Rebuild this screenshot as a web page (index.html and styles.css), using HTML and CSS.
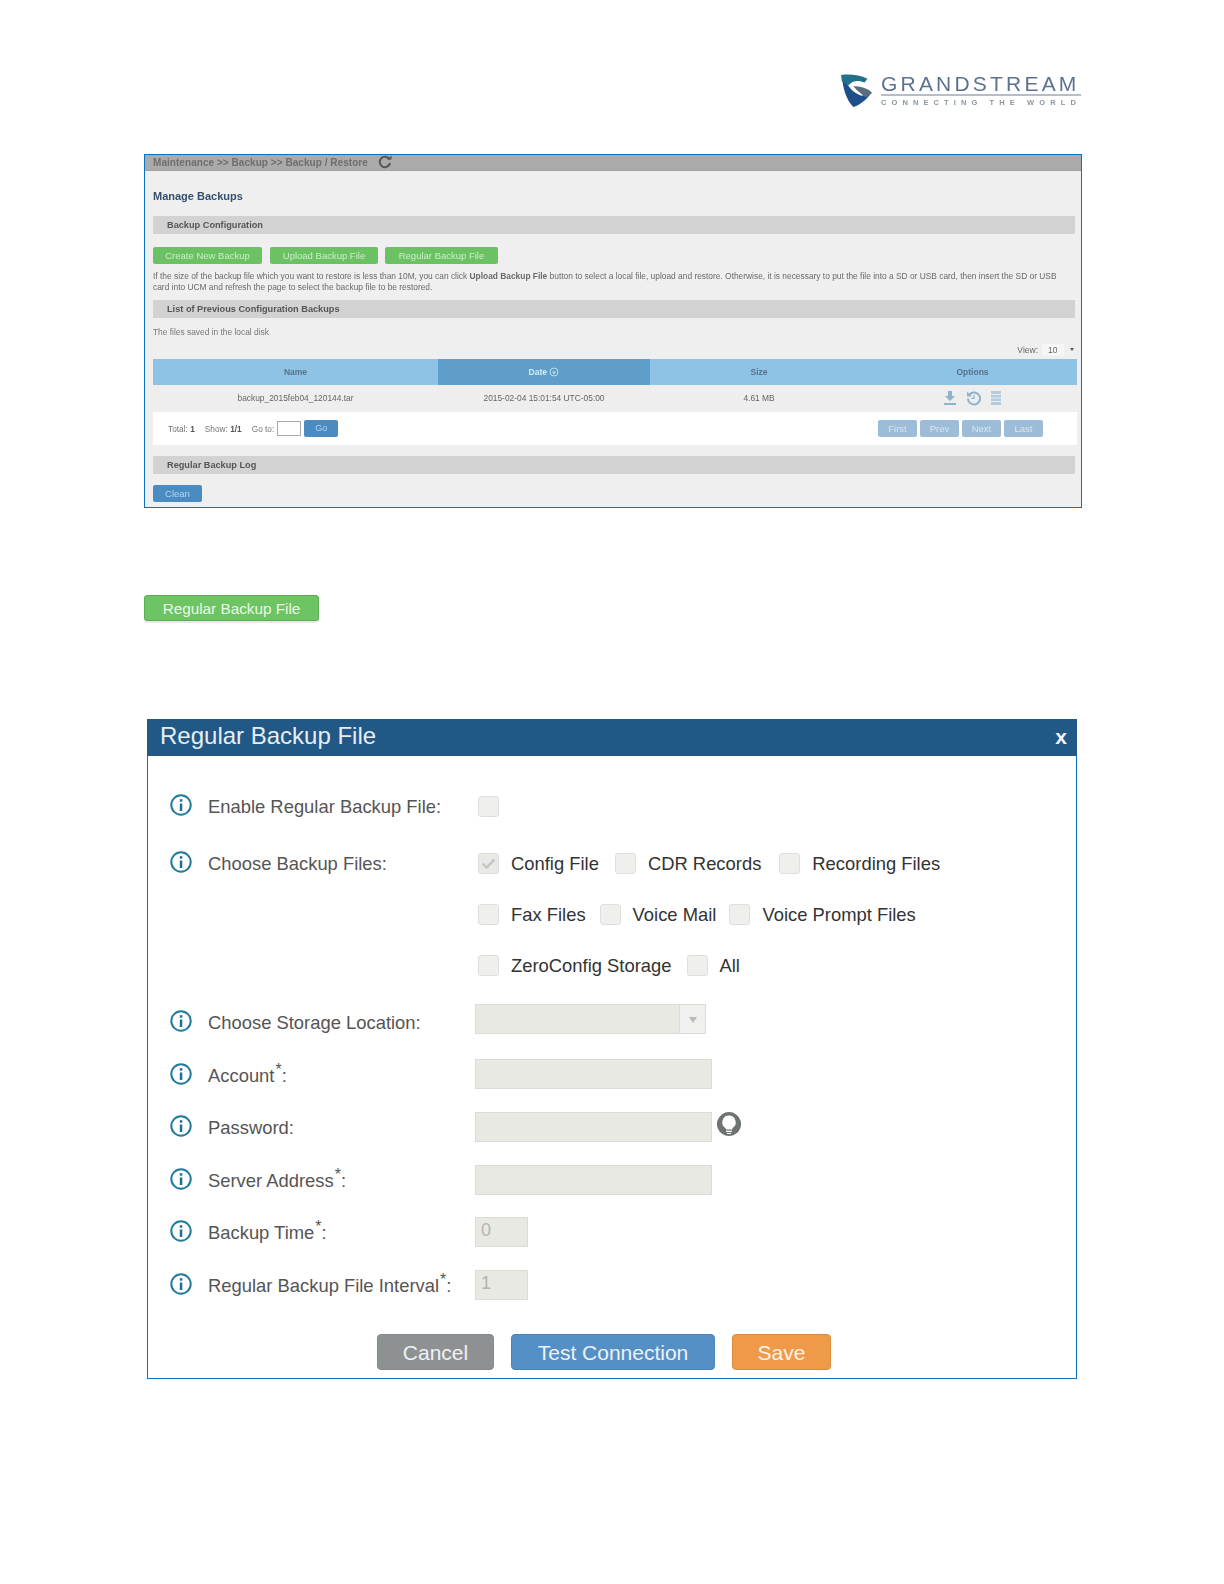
FILE: index.html
```html
<!DOCTYPE html>
<html lang="en">
<head>
<meta charset="utf-8">
<title>Regular Backup File</title>
<link rel="stylesheet" href="styles.css">
</head>
<body>
<div class="page">
  <header class="logo">
    <svg class="logo-mark" viewBox="0 0 36 36" width="34" height="36">
      <path d="M1 3 C2 16 6 28 13 35 C20 33 27 27 32 20 L22 23 C14 20 10 16 7 11 Z" fill="#1f4f8a"/>
      <path d="M0 1 C10 0 20 1 28 5 L25 9 C18 6 12 7 8 12 L1 8 Z" fill="#23708a"/>
      <path d="M13 13 C20 13 29 15 33 20 L26 25 C22 21 17 18 13 13Z" fill="#5a6c7e"/>
    </svg>
    <div class="logo-text">
      <div class="logo-name">GRANDSTREAM</div>
      <div class="logo-rule"></div>
      <div class="logo-sub">CONNECTING THE WORLD</div>
    </div>
  </header>

  <section class="shot">
    <div class="crumb">
      <span>Maintenance &gt;&gt; Backup &gt;&gt; Backup / Restore</span>
      <svg class="crumb-icon" viewBox="0 0 14 14" width="14" height="14"><path d="M11.5 4.5A5.2 5.2 0 1 0 12 8" fill="none" stroke="#555" stroke-width="2"/><path d="M9 4.5h4.5V.5z" fill="#555"/></svg>
    </div>
    <div class="shot-body">
      <h2 class="shot-title">Manage Backups</h2>
      <div class="bar">Backup Configuration</div>
      <div class="green-row">
        <span class="mini-green w1">Create New Backup</span>
        <span class="mini-green w2">Upload Backup File</span>
        <span class="mini-green w3">Regular Backup File</span>
      </div>
      <p class="note">If the size of the backup file which you want to restore is less than 10M, you can click <b>Upload Backup File</b> button to select a local file, upload and restore. Otherwise, it is necessary to put the file into a SD or USB card, then insert the SD or USB card into UCM and refresh the page to select the backup file to be restored.</p>
      <div class="bar bar-second">List of Previous Configuration Backups</div>
      <p class="saved">The files saved in the local disk</p>
      <div class="view"><span>View:</span><span class="view-box">10</span><span class="view-arrow"></span></div>
      <table class="list">
        <colgroup><col class="c1"><col class="c2"><col class="c3"><col class="c4"></colgroup>
        <thead>
          <tr><th>Name</th><th class="sorted">Date <svg viewBox="0 0 10 10" width="10" height="10"><circle cx="5" cy="5" r="4" fill="none" stroke="#bcdcf0"/><path d="M3 4.5h4L5 7.5z" fill="#bcdcf0"/></svg></th><th>Size</th><th>Options</th></tr>
        </thead>
        <tbody>
          <tr>
            <td>backup_2015feb04_120144.tar</td>
            <td>2015-02-04 15:01:54 UTC-05:00</td>
            <td>4.61 MB</td>
            <td class="opts">
              <svg viewBox="0 0 14 16" width="14" height="16"><path d="M5 1h4v5h3L7 11 2 6h3z" fill="#8db3cc"/><path d="M1 13h12v2H1z" fill="#8db3cc"/></svg>
              <svg viewBox="0 0 16 16" width="16" height="16"><path d="M3.5 4.5A6 6 0 1 1 2 8.5" fill="none" stroke="#8db3cc" stroke-width="2"/><path d="M1 1.5v5h5z" fill="#8db3cc"/><path d="M8 5v3.5h-3" fill="none" stroke="#8db3cc" stroke-width="1.2"/></svg>
              <svg viewBox="0 0 12 14" width="12" height="14"><path d="M1 0h10v14H1z" fill="#b3cbdc"/><path d="M1 3.5h10M1 7h10M1 10.500h10" stroke="#e6eef2"/></svg>
            </td>
          </tr>
        </tbody>
      </table>
      <div class="pager">
        <span class="pg-info">Total: <b>1</b></span>
        <span class="pg-info">Show: <b>1/1</b></span>
        <span class="pg-info">Go to:</span>
        <span class="pg-input"></span>
        <span class="pg-go">Go</span>
        <span class="pg-nav">
          <span class="pg-btn">First</span><span class="pg-btn">Prev</span><span class="pg-btn">Next</span><span class="pg-btn">Last</span>
        </span>
      </div>
      <div class="bar bar-third">Regular Backup Log</div>
      <span class="clean">Clean</span>
    </div>
  </section>

  <div class="green-wrap"><span class="green-btn">Regular Backup File</span></div>

  <section class="modal">
    <div class="modal-head"><span class="modal-title">Regular Backup File</span><span class="modal-x">x</span></div>
    <div class="form">
      <div class="row row-enable">
        <svg class="info" viewBox="0 0 22 22"><use href="#i"/></svg>
        <label class="lab">Enable Regular Backup File:</label>
        <span class="box box-first"></span>
      </div>
      <div class="row row-files">
        <svg class="info" viewBox="0 0 22 22"><use href="#i"/></svg>
        <label class="lab">Choose Backup Files:</label>
        <span class="box box-first box-on"><svg viewBox="0 0 21 21" width="19" height="19"><path d="M4 10.500l4.500 4.500 8.500-9" fill="none" stroke="#c4c4c0" stroke-width="2.600"/></svg></span>
        <span class="opt gap-16">Config File</span>
        <span class="box"></span>
        <span class="opt gap-18">CDR Records</span>
        <span class="box"></span>
        <span class="opt">Recording Files</span>
      </div>
      <div class="row row-more">
        <span class="box"></span>
        <span class="opt gap-14">Fax Files</span>
        <span class="box"></span>
        <span class="opt gap-13">Voice Mail</span>
        <span class="box"></span>
        <span class="opt">Voice Prompt Files</span>
      </div>
      <div class="row row-more row-last">
        <span class="box"></span>
        <span class="opt gap-15">ZeroConfig Storage</span>
        <span class="box"></span>
        <span class="opt">All</span>
      </div>
      <div class="row row-field row-storage">
        <svg class="info" viewBox="0 0 22 22"><use href="#i"/></svg>
        <label class="lab">Choose Storage Location:</label>
        <span class="select"><span class="select-fill"></span><span class="select-arrow"></span></span>
      </div>
      <div class="row row-field row-account">
        <svg class="info" viewBox="0 0 22 22"><use href="#i"/></svg>
        <label class="lab">Account<sup>*</sup>:</label>
        <span class="input"></span>
      </div>
      <div class="row row-field">
        <svg class="info" viewBox="0 0 22 22"><use href="#i"/></svg>
        <label class="lab">Password:</label>
        <span class="input"></span>
        <svg class="bulb" viewBox="0 0 24 24" width="24" height="24"><path d="M12 0a12 12 0 0 1 6.500 22.100Q16 24 12 24t-6.500-1.900A12 12 0 0 1 12 0z" fill="#6f7273"/><path d="M12 3.500a6.800 6.800 0 0 1 3.600 12.500L15 17.500H9l-.6-1.500A6.800 6.800 0 0 1 12 3.500z" fill="#fff"/><path d="M9 18.800h6v1.200H9zM10 21h4v1h-4z" fill="#fff"/></svg>
      </div>
      <div class="row row-field row-tight">
        <svg class="info" viewBox="0 0 22 22"><use href="#i"/></svg>
        <label class="lab">Server Address<sup>*</sup>:</label>
        <span class="input"></span>
      </div>
      <div class="row row-field">
        <svg class="info" viewBox="0 0 22 22"><use href="#i"/></svg>
        <label class="lab">Backup Time<sup>*</sup>:</label>
        <span class="input input-short">0</span>
      </div>
      <div class="row row-field">
        <svg class="info" viewBox="0 0 22 22"><use href="#i"/></svg>
        <label class="lab">Regular Backup File Interval<sup>*</sup>:</label>
        <span class="input input-short">1</span>
      </div>
      <div class="actions">
        <span class="act act-cancel">Cancel</span>
        <span class="act act-test">Test Connection</span>
        <span class="act act-save">Save</span>
      </div>
    </div>
  </section>
</div>
<svg class="defs" width="0" height="0">
  <symbol id="i" viewBox="0 0 22 22">
    <circle cx="11" cy="11" r="9.700" fill="none" stroke="#1f7a9c" stroke-width="2"/>
    <rect x="9.800" y="9.500" width="2.500" height="7.500" fill="#1f6f90"/>
    <rect x="9.800" y="5.200" width="2.500" height="2.500" fill="#1f6f90"/>
  </symbol>
</svg>
</body>
</html>
```

FILE: styles.css
```css
* { box-sizing: border-box; }
html, body { margin: 0; padding: 0; background: #fff; }
body { font-family: "Liberation Sans", Arial, sans-serif; }
.page { width: 1224px; height: 1584px; overflow: hidden; padding-top: 73px; }
.defs { display: block; height: 0; }

/* logo */
.logo { display: flex; justify-content: flex-end; gap: 6px; height: 81px; padding-right: 143px; filter: blur(0.6px); }
.logo-mark { flex: none; }
.logo-text { width: 200px; padding-top: 1px; }
.logo-name { font-size: 21px; line-height: 19px; letter-spacing: 3.2px; color: #5d7290; white-space: nowrap; }
.logo-rule { height: 2px; background: #b4bdc9; margin-top: 1px; }
.logo-sub { font-size: 7.500px; line-height: 13px; letter-spacing: 5.100px; font-weight: bold; color: #8b95a3; white-space: nowrap; }

/* blurred screenshot */
.shot { width: 938px; height: 354px; margin-left: 144px; border: 1px solid #0a72c0; background: #efefef; overflow: hidden; }
.crumb { height: 16px; background: #aaa; border-bottom: 1px solid #a2a2a2; padding-left: 8px; display: flex; align-items: center; gap: 10px; font-size: 10px; font-weight: bold; color: #6e6e6e; filter: blur(0.5px); }
.crumb span { letter-spacing: 0.05px; }
.crumb-icon { flex: none; margin-top: -2px; }
.shot-body { padding: 0 4px 0 8px; filter: blur(0.55px); }
.shot-title { margin: 18px 0 0; height: 27px; font-size: 11px; line-height: 14px; font-weight: bold; color: #34506f; }
.bar { height: 18px; margin-right: 2px; padding-left: 14px; background: #d2d2d2; font-size: 9.200px; line-height: 18px; font-weight: bold; color: #555; }
.green-row { display: flex; gap: 8px; margin-top: 13px; }
.mini-green { height: 17px; background: #6dc165; color: #c9eec4; font-size: 9.500px; line-height: 17px; text-align: center; border-radius: 2px; }
.w1 { width: 109px; }
.w2 { width: 108px; }
.w3 { width: 113px; margin-left: -1px; }
.note { margin: 7px 0 0; height: 22px; width: 915px; font-size: 8.400px; line-height: 11px; color: #6a6a6a; }
.bar-second { margin-top: 7px; }
.saved { margin: 8px 0 0; height: 14px; font-size: 8.400px; line-height: 12px; color: #777; }
.view { display: flex; justify-content: flex-end; align-items: center; height: 13px; margin-top: 3px; font-size: 8.500px; color: #666; }
.view-box { width: 22px; height: 12px; margin-left: 4px; background: #f6f6f6; text-align: left; padding-left: 6px; line-height: 12px; }
.view-arrow { width: 0; height: 0; margin: 0 3px 0 6px; border: 2.500px solid transparent; border-top: 3px solid #555; border-bottom: 0; }
.list { width: 924px; margin-top: 3px; border-collapse: collapse; table-layout: fixed; }
.c1 { width: 285px; }
.c2 { width: 212px; }
.c3 { width: 218px; }
.c4 { width: 209px; }
.list th { height: 26px; padding: 0; background: #8fc3e6; font-size: 8.500px; color: #56718a; }
.list th.sorted { background: #5e9ec8; color: #d7ecf8; }
.list th svg { vertical-align: -2px; }
.list td { height: 27px; padding: 0 0 1px; background: #eee; text-align: center; font-size: 8.400px; color: #666; }
.opts svg { vertical-align: middle; margin: 0 3px; }
.pager { display: flex; align-items: center; width: 924px; height: 33px; padding-left: 15px; background: #fff; font-size: 8.300px; color: #777; }
.pg-info { margin-right: 10px; }
.pg-info b { color: #555; }
.pg-input { width: 24px; height: 15px; margin-left: -7px; background: #fff; border: 1px solid #aaa; }
.pg-go { width: 34px; height: 17px; margin-left: 3px; background: #4a8cc2; color: #b7d6ee; border-radius: 2px; text-align: center; line-height: 17px; font-size: 9px; }
.pg-nav { display: flex; gap: 3px; margin-left: auto; margin-right: 34px; }
.pg-btn { width: 39px; height: 17px; background: #9dbcd8; color: #d7e6f2; border-radius: 2px; text-align: center; line-height: 17px; font-size: 9.500px; }
.bar-third { margin-top: 11px; }
.clean { display: block; width: 49px; height: 17px; margin-top: 11px; background: #4a8cc2; color: #b7d6ee; border-radius: 2px; font-size: 9.500px; line-height: 17px; text-align: center; }

/* green button */
.green-wrap { margin: 87px 0 0 144px; height: 27px; }
.green-btn { display: block; width: 175px; height: 26px; background: #6cc463; border: 1px solid #5dab55; border-radius: 3px; box-shadow: 0 2px 0 #e8e8e8; color: #eaf8e6; font-size: 15.300px; line-height: 25px; text-align: center; }

/* modal */
.modal { width: 930px; height: 660px; margin: 97px 0 0 147px; border: 1px solid #0a72c0; border-top: 0; }
.modal-head { display: flex; justify-content: space-between; align-items: center; height: 37px; margin: 0 -1px; padding: 0 10px 0 13px; background: #225886; color: #e6eef5; font-size: 24px; }
.modal-title { margin-top: -3px; }
.modal-x { margin-top: -2px; font-size: 21px; font-weight: bold; color: #f2f6fa; }
.form { padding: 40px 0 0 22px; }
.row { display: flex; align-items: center; }
.info { flex: none; width: 22px; height: 22px; margin-right: 16px; margin-top: -3px; }
.lab { flex: none; width: 267px; font-size: 18.400px; line-height: 21px; color: #555; }
.lab sup { font-size: 16px; line-height: 0; vertical-align: 7px; margin-left: 1px; }
.box { flex: none; display: block; width: 21px; height: 21px; background: #efefed; border: 1px solid #dfdfdb; border-radius: 3px; }
.box-first { margin-left: 3px; }
.box-on { background: #e9e9e6; }
.box-on svg { display: block; }
.opt { margin-left: 12px; font-size: 18.400px; line-height: 21px; color: #333; white-space: nowrap; }
.gap-13 { margin-right: 13px; }
.gap-14 { margin-right: 14px; }
.gap-15 { margin-right: 15px; }
.gap-16 { margin-right: 16px; }
.gap-18 { margin-right: 18px; }
.row-enable { height: 21px; }
.row-files { height: 21px; margin-top: 36px; }
.row-more { height: 21px; margin-top: 30px; padding-left: 308px; }
.row-last { margin-bottom: 28px; }
.row-field { height: 30px; margin-bottom: 23px; }
.row-storage { margin-bottom: 25px; }
.row-storage .info { margin-top: 3px; }
.row-storage .lab { padding-top: 6px; }
.row-account .info { margin-top: -1px; }
.row-account .lab { padding-top: 2px; }
.row-tight { margin-bottom: 22px; }
.select { display: flex; width: 231px; height: 30px; background: #f0f0ee; border: 1px solid #dcdcd6; }
.select-fill { width: 204px; height: 100%; background: #e9e9e4; border-right: 1px solid #dcdcd6; }
.select-arrow { width: 0; height: 0; margin: 12px 0 0 9px; border: 4px solid transparent; border-top: 6px solid #bcbcb8; border-bottom: 0; }
.input { display: block; width: 237px; height: 30px; background: #e9e9e4; border: 1px solid #dcdcd6; font-size: 18px; line-height: 24px; padding-left: 5px; color: #b4b4b0; }
.input-short { width: 53px; }
.bulb { flex: none; margin: -6px 0 0 5px; }
.actions { display: flex; gap: 17px; margin-top: 34px; padding-left: 207px; }
.act { display: block; height: 36px; border-radius: 4px; font-size: 21px; line-height: 35px; text-align: center; color: #eef2f5; }
.act-cancel { width: 117px; background: #8d9192; border: 1px solid #85898a; }
.act-test { width: 204px; background: #5490c5; border: 1px solid #4a85b8; }
.act-save { width: 99px; background: #ee9a48; border: 1px solid #dc8a3c; color: #fff4e8; }
```
